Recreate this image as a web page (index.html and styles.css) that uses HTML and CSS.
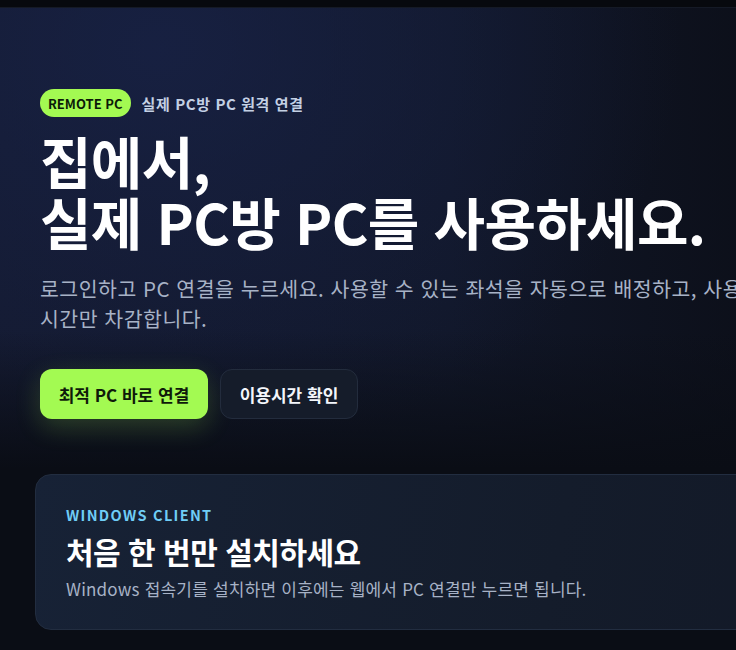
FILE: index.html
```html
<!DOCTYPE html>
<html lang="ko">
<head>
<meta charset="utf-8">
<link rel="stylesheet" href="styles.css">
</head>
<body>
<div class="topbar"></div>
<main class="page">
  <section class="hero">
    <div class="eyebrow">
      <span class="pill">REMOTE PC</span>
      <span class="eyebrow-text">실제 PC방 PC 원격 연결</span>
    </div>
    <h1 class="title">집에서,<br>실제 PC방 PC를 사용하세요.</h1>
    <p class="lead">로그인하고 PC 연결을 누르세요. 사용할 수 있는 좌석을 자동으로 배정하고, 사용한 시간만 차감합니다.</p>
    <div class="actions">
      <button class="btn btn-primary">최적 PC 바로 연결</button>
      <button class="btn btn-ghost">이용시간 확인</button>
    </div>
  </section>
  <section class="card">
    <div class="card-kicker">WINDOWS CLIENT</div>
    <h2 class="card-title">처음 한 번만 설치하세요</h2>
    <p class="card-text">Windows 접속기를 설치하면 이후에는 웹에서 PC 연결만 누르면 됩니다.</p>
  </section>
</main>
</body>
</html>
```
FILE: styles.css
```css
html, body {
  margin: 0;
  padding: 0;
  background: #0a0d15;
  overflow: hidden;
  width: 736px;
  height: 650px;
}
body {
  font-family: "Noto Sans CJK KR", "Noto Sans", sans-serif;
  color: #f3f6fb;
}
.topbar {
  height: 7px;
  background: #07090e;
  border-bottom: 1px solid #151a26;
}
.page {
  width: 900px;
}
.hero {
  padding: 81px 40px 50px 40px;
  background:
    linear-gradient(180deg, rgba(10, 13, 21, 0) 0%, rgba(10, 13, 21, 0) 70%, rgba(10, 13, 21, 1) 100%),
    radial-gradient(ellipse 520px 420px at 160px 40px, rgba(24, 34, 70, 0.8), rgba(24, 34, 70, 0) 100%),
    linear-gradient(90deg, #141a30 0%, #111729 50%, #0c0f19 85%);
}
.eyebrow {
  display: flex;
  align-items: center;
  gap: 11px;
  height: 28px;
}
.pill {
  display: inline-flex;
  align-items: center;
  height: 28px;
  padding: 0 8px;
  border-radius: 14px;
  background: #a3fa52;
  color: #0c1a08;
  font-size: 13px;
  font-weight: 700;
}
.eyebrow-text {
  color: #c3d0e4;
  font-size: 15px;
  font-weight: 700;
  letter-spacing: 0.6px;
}
.title {
  margin: 12px 0 0 0;
  font-size: 56px;
  line-height: 61px;
  font-weight: 700;
  color: #ffffff;
  letter-spacing: -0.7px;
  white-space: nowrap;
}
.lead {
  margin: 22px 0 0 0;
  font-size: 20.5px;
  line-height: 30px;
  color: #a7b2c6;
  width: 730px;
  letter-spacing: 0.5px;
}
.actions {
  display: flex;
  gap: 12px;
  margin-top: 36px;
}
.btn {
  height: 50px;
  border-radius: 12px;
  font-family: inherit;
  font-size: 17px;
  font-weight: 700;
  padding: 0;
  cursor: pointer;
}
.btn-primary {
  width: 168px;
  background: #a3fa52;
  color: #0f1a0a;
  border: none;
  box-shadow: 0 8px 26px rgba(163, 250, 82, 0.2);
}
.btn-ghost {
  width: 138px;
  background: #151c2a;
  color: #f3f6fb;
  border: 1px solid #232c3d;
}
.card {
  margin: 5px 0 0 35px;
  padding: 30px 30px 27px 30px;
  border-radius: 16px;
  border: 1px solid #222d40;
  background: linear-gradient(100deg, #172236 0%, #141c2b 60%, #121826 100%);
}
.card-kicker {
  color: #6fcdf6;
  font-size: 14.5px;
  font-weight: 700;
  letter-spacing: 1.3px;
  line-height: 20px;
}
.card-title {
  margin: 7px 0 0 0;
  font-size: 30px;
  line-height: 38px;
  font-weight: 700;
  color: #ffffff;
  letter-spacing: -0.5px;
}
.card-text {
  margin: 6px 0 0 0;
  font-size: 17px;
  line-height: 26px;
  color: #a7b2c6;
  letter-spacing: 0.2px;
}
```
